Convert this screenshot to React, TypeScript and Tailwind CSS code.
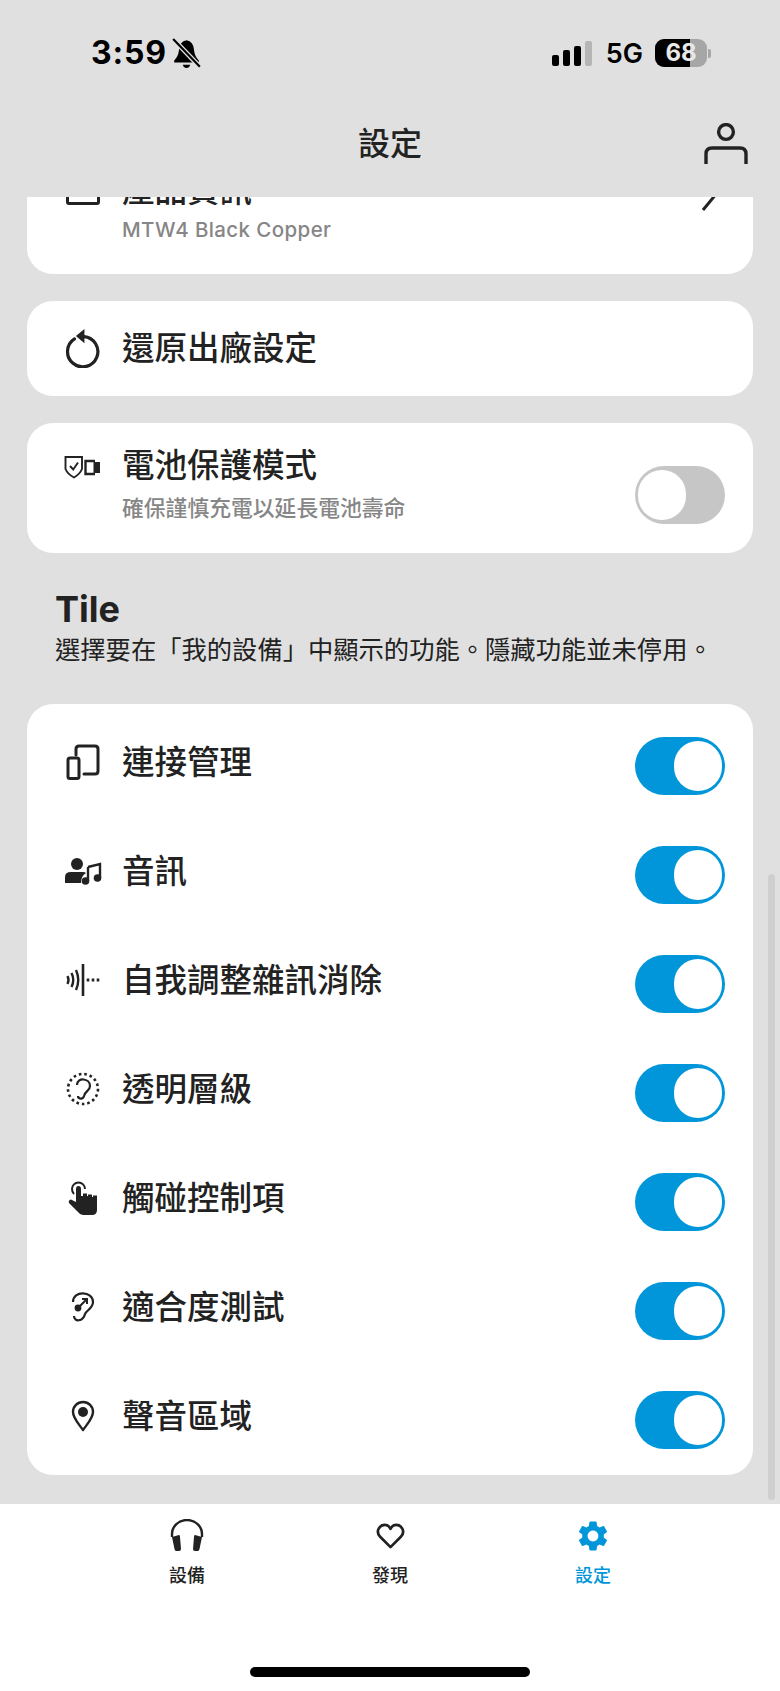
import React from "react";
import { MdSettings } from "react-icons/md";

const cjk = { fontFamily: '"Inter","Noto Sans CJK TC",sans-serif' };

function Toggle({ on }: { on: boolean }) {
  return (
    <div className={"flex h-[58px] w-[90px] shrink-0 items-center rounded-full p-[3px] " + (on ? "justify-end bg-[#0096d9]" : "justify-start bg-[#c6c6c6]")}>
      <div className="h-[50px] w-[48px] rounded-full bg-white" />
    </div>
  );
}

const IconReset = () => (
  <svg width="36" height="42" viewBox="0 0 38 44" fill="none" stroke="#222" strokeWidth="3.4">
    <path d="M10 13.5A16 16 0 1 0 20 11" strokeLinecap="round" />
    <path d="M20.5 3 L11.5 10.5 L20.5 18 Z" fill="#222" stroke="none" />
  </svg>
);
const IconShield = () => (
  <svg width="38" height="26" viewBox="0 0 38 26" fill="none" stroke="#222" strokeWidth="1.9">
    <path d="M1.5 3 L18 3 L18 15 Q16 20 10 23.5 Q3.5 20 1.5 15 Z" />
    <path d="M6 12 L9.2 15.5 L14 8.5" />
    <path d="M31 7 L21.5 7 L21.5 20 L31 20" strokeWidth="2.4" />
    <rect x="29.5" y="8" width="6.5" height="11" fill="#222" stroke="none" />
  </svg>
);
const IconDevices = () => (
  <svg width="34" height="36" viewBox="0 0 34 36" fill="none" stroke="#222" strokeWidth="3">
    <path d="M10 11 V5 Q10 2 13 2 H29 Q32 2 32 5 V27 Q32 30 29 30 H18" strokeLinecap="round" />
    <rect x="2" y="14" width="11" height="20.5" rx="2" />
  </svg>
);
const IconAudio = () => (
  <svg width="38" height="28" viewBox="0 0 38 28" fill="#222">
    <circle cx="13" cy="7" r="6" />
    <path d="M1 26 V20 Q1 15 7 15 H19 Q21 15 22 16 Q17 19 17 26 Z" />
    <path d="M24 10 L36 7 V21" fill="none" stroke="#222" strokeWidth="2.4" />
    <path d="M24 10 V24" fill="none" stroke="#222" strokeWidth="2.4" />
    <circle cx="21.5" cy="24" r="3.8" />
    <circle cx="33.5" cy="21" r="3.8" />
  </svg>
);
const IconAnc = () => (
  <svg width="36" height="34" viewBox="0 0 36 34" fill="none" stroke="#222" strokeWidth="2.4">
    <path d="M2.5 13 Q4.5 17 2.5 21" />
    <path d="M6.5 10 Q10 17 6.5 24" />
    <path d="M11 7 Q15.5 17 11 27" />
    <path d="M18 1 V33" strokeWidth="2.6" />
    <path d="M23 15.5 V18.5 M28 15.5 V18.5 M33 15.5 V18.5" strokeWidth="2.6" />
  </svg>
);
const IconEarDotted = () => (
  <svg width="34" height="34" viewBox="0 0 34 34" fill="none" stroke="#222" strokeWidth="2.2">
    <circle cx="17" cy="17" r="15" strokeDasharray="2.6 2.9" strokeWidth="2.6" />
    <path d="M11 13 C11 5 24 6 24 14 C24 19 19 19 18 24 C17 28 12 27 12 24" />
  </svg>
);
const IconTouch = () => (
  <svg width="32" height="36" viewBox="0 0 32 36" fill="#222">
    <path d="M9 9 Q9 6 11.5 6 Q14 6 14 9 V16 L16 16 V13.5 H20 V16 H21 V14.5 H25 V17 H26 V15.5 H30 V30 Q30 35 25 35 H16 Q13 35 11 32 L2 23 Q1 20 4 19.5 L9 22 Z" />
    <path d="M5 9 A6.5 6.5 0 1 1 18 9" fill="none" stroke="#222" strokeWidth="2" />
    <path d="M5 9 Q5 12 7 14" fill="none" stroke="#222" strokeWidth="2" />
  </svg>
);
const IconEarFit = () => (
  <svg width="24" height="32" viewBox="0 0 24 32" fill="none" stroke="#222" strokeWidth="2.2">
    <path d="M2 11 C2 -1 22 0 22 11 C22 17 16 19 14 23 C12 31 3 31 3 25" />
    <path d="M7 17 L16 8 M11 8 H16 V13" strokeWidth="2" />
    <circle cx="7" cy="17" r="3.4" fill="#222" stroke="none" />
  </svg>
);
const IconPin = () => (
  <svg width="24" height="32" viewBox="0 0 24 32" fill="none" stroke="#222" strokeWidth="2.4">
    <path d="M12 30 C7 23 2 18 2 12 A10 10 0 0 1 22 12 C22 18 17 23 12 30 Z" strokeLinejoin="round" />
    <circle cx="12" cy="12" r="5" fill="#222" stroke="none" />
  </svg>
);
const IconUser = () => (
  <svg width="44" height="42" viewBox="0 0 44 42" fill="none" stroke="#222" strokeWidth="3.4">
    <circle cx="22" cy="9" r="7.4" />
    <path d="M2 41 V31 Q2 25 8 25 H36 Q42 25 42 31 V41" />
  </svg>
);
const IconBellOff = () => (
  <svg width="29" height="31" viewBox="0 0 27 29" fill="#000">
    <path d="M13.5 2 Q20 3 20.5 11 Q21 17 25 21 V23 H2 V21 Q6 17 6.5 11 Q7 3 13.5 2 Z" />
    <path d="M10 25 H17 Q16 28 13.5 28 Q11 28 10 25 Z" />
    <path d="M1 1 L26 27" stroke="#e0e0e0" strokeWidth="4.5" />
    <path d="M1 1 L26 27" stroke="#000" strokeWidth="2" />
  </svg>
);
const IconHeadphones = () => (
  <svg width="34" height="34" viewBox="0 0 34 34" fill="none" stroke="#222" strokeWidth="2.4">
    <path d="M2 18 V15 A15 14 0 0 1 32 15 V18" />
    <path d="M2 18 L9 16 Q10 16 10 18 L11 30 Q11 32 9 32 L6 32 Q5 32 4.5 30 Z" fill="#222" stroke="none" />
    <path d="M32 18 L25 16 Q24 16 24 18 L23 30 Q23 32 25 32 L28 32 Q29 32 29.5 30 Z" fill="#222" stroke="none" />
  </svg>
);
const IconHeart = () => (
  <svg width="29" height="27" viewBox="0 0 30 28" fill="none" stroke="#222" strokeWidth="2.8">
    <path d="M15 25 L4 14 C-1 8 4 2 9 2 C12 2 14 4 15 6 C16 4 18 2 21 2 C26 2 31 8 26 14 Z" strokeLinejoin="round" />
  </svg>
);

function Row({ icon, label }: { icon: React.ReactNode; label: string }) {
  return (
    <div className="flex h-[109px] items-center pl-[37px] pr-[28px]">
      <div className="flex w-[38px] shrink-0 -translate-y-[4px] justify-center">{icon}</div>
      <div className="ml-[20px] flex-1 -translate-y-[3px] text-[32.5px] leading-[44px] font-medium text-[#222]">{label}</div>
      <Toggle on />
    </div>
  );
}

const rows: [React.ReactNode, string][] = [
  [<IconDevices />, "連接管理"],
  [<IconAudio />, "音訊"],
  [<IconAnc />, "自我調整雜訊消除"],
  [<IconEarDotted />, "透明層級"],
  [<IconTouch />, "觸碰控制項"],
  [<IconEarFit />, "適合度測試"],
  [<IconPin />, "聲音區域"],
];

function NavItem({ icon, label, active }: { icon: React.ReactNode; label: string; active?: boolean }) {
  return (
    <div className="flex w-[203px] flex-col items-center">
      <div className="flex h-[36px] items-center justify-center">{icon}</div>
      <div className={"mt-[10px] text-[18px] leading-[24px] font-medium " + (active ? "text-[#0096d9]" : "text-[#222]")}>{label}</div>
    </div>
  );
}

export default function App() {
  return (
    <div className="relative flex h-[1691px] w-[780px] flex-col overflow-hidden bg-[#e0e0e0]" style={cjk}>
      <header className="h-[197px] shrink-0">
        <div className="flex h-[106px] items-center justify-between pl-[91px] pr-[69px]">
          <div className="flex items-center gap-[5px]">
            <span className="text-[32px] leading-none font-bold tracking-[0.8px] text-black">3:59</span>
            <IconBellOff />
          </div>
          <div className="flex items-center">
            <div className="flex items-end gap-[4px]">
              <div className="h-[11px] w-[7px] rounded-[2px] bg-black" />
              <div className="h-[16px] w-[7px] rounded-[2px] bg-black" />
              <div className="h-[20px] w-[7px] rounded-[2px] bg-black" />
              <div className="h-[25px] w-[7px] rounded-[2px] bg-[#b5b5b5]" />
            </div>
            <span className="ml-[14px] text-[27px] leading-none font-semibold text-black">5G</span>
            <div className="ml-[12px] flex items-center">
              <div className="relative flex h-[28px] w-[52px] items-center justify-center overflow-hidden rounded-[9px] bg-[#a6a6a6]">
                <div className="absolute inset-y-0 left-0 w-[35px] bg-black" />
                <span className="relative text-[24px] leading-none font-bold text-[#e8e8e8]">68</span>
              </div>
              <div className="ml-[1px] h-[9px] w-[3px] rounded-r-[2px] bg-[#a6a6a6]" />
            </div>
          </div>
        </div>
        <div className="grid h-[76px] grid-cols-[1fr_auto_1fr] items-center">
          <div />
          <div className="text-[32px] leading-[44px] font-medium text-[#222]">設定</div>
          <div className="mr-[32px] justify-self-end">
            <IconUser />
          </div>
        </div>
      </header>

      <main className="relative min-h-0 flex-1 overflow-hidden px-[27px]">
        <div className="-mt-[60px] flex flex-col">
          <div className="flex h-[137px] rounded-[26px] bg-white pl-[37px] pr-[33px] pt-[32px]">
            <div className="flex w-[38px] shrink-0 justify-center pt-[6px]">
              <div className="h-[30px] w-[34px] rounded-[3px] border-[3px] border-[#222]" />
            </div>
            <div className="ml-[20px] flex-1">
              <div className="text-[32.5px] leading-[44px] font-medium text-[#222]">產品資訊</div>
              <div className="mt-[3px] text-[20.5px] leading-[28px] font-medium tracking-[0.4px] text-[#868686]">MTW4 Black Copper</div>
            </div>
            <svg width="20" height="42" viewBox="0 0 20 42" fill="none" stroke="#222" strokeWidth="3" className="mt-[4px]">
              <path d="M3 3 L17 20 L3 37" />
            </svg>
          </div>

          <div className="mt-[27px] flex h-[95px] items-center rounded-[26px] bg-white pl-[37px]">
            <div className="flex w-[38px] shrink-0 -translate-y-[2px] justify-center"><IconReset /></div>
            <div className="ml-[20px] text-[32.5px] leading-[44px] font-medium text-[#222]">還原出廠設定</div>
          </div>

          <div className="mt-[27px] flex h-[130px] rounded-[26px] bg-white pl-[37px] pr-[28px]">
            <div className="flex w-[38px] shrink-0 justify-center pt-[31px]"><IconShield /></div>
            <div className="ml-[20px] flex-1 pt-[21px]">
              <div className="text-[32.5px] leading-[44px] font-medium text-[#222]">電池保護模式</div>
              <div className="mt-[5px] text-[21.8px] leading-[30px] font-medium text-[#868686]">確保謹慎充電以延長電池壽命</div>
            </div>
            <div className="pt-[43px]"><Toggle on={false} /></div>
          </div>

          <div className="mt-[33px] pl-[28px]">
            <div className="text-[36px] leading-[46px] font-bold text-[#222]">Tile</div>
            <div className="text-[25.3px] leading-[36px] text-[#222]">選擇要在「我的設備」中顯示的功能。隱藏功能並未停用。</div>
          </div>

          <div className="mt-[36px] rounded-[26px] bg-white pb-[1px] pt-[7px]">
            {rows.map(([icon, label]) => (
              <Row key={label} icon={icon} label={label} />
            ))}
          </div>
        </div>
        <div className="absolute bottom-[4px] right-[5px] top-[677px] w-[7px] rounded-full bg-[#cfcfcf]" />
      </main>

      <nav className="relative h-[187px] shrink-0 bg-white pt-[14px]">
        <div className="flex justify-center">
          <NavItem icon={<IconHeadphones />} label="設備" />
          <NavItem icon={<IconHeart />} label="發現" />
          <NavItem icon={<MdSettings size={36} color="#0096d9" />} label="設定" active />
        </div>
        <div className="absolute bottom-[14px] left-[250px] h-[10px] w-[280px] rounded-full bg-black" />
      </nav>
    </div>
  );
}
